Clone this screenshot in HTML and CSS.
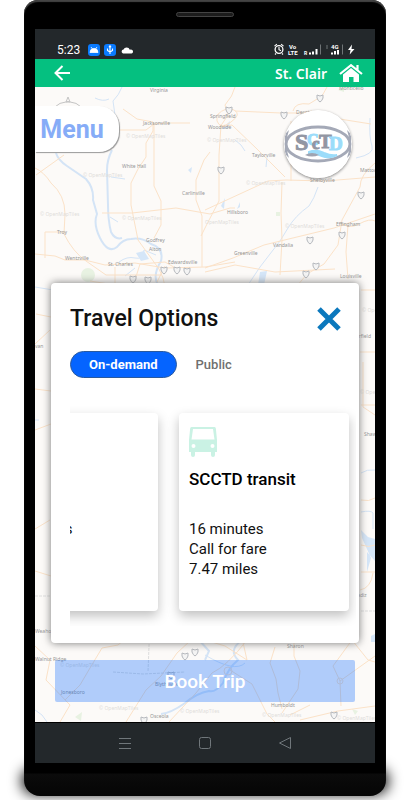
FILE: index.html
```html
<!DOCTYPE html>
<html lang="en">
<head>
<meta charset="UTF-8">
<meta name="viewport" content="width=device-width, initial-scale=1">
<title>St. Clair - Travel Options</title>
<link rel="stylesheet" href="styles.css">
</head>
<body>
<div class="phone">
  <div class="speaker"></div>
  <div class="screen">

    <div class="status-bar">
      <span class="clock">5:23</span>
      <svg class="status-left" width="46" height="12" viewBox="0 0 46 12">
        <rect width="12" height="12" rx="3" fill="#0a7bff"/>
        <path d="M2 8.5a4 4 0 0 1 8 0zM3 3l1.5 2M9 3L7.500 5" fill="#fff" stroke="#fff" stroke-width=".8"/>
        <rect x="16" width="12" height="12" rx="3" fill="#0a7bff"/>
        <path d="M22 2v8M19.500 4.500v2L22 8l2.500-1.500v-2M21 3.200l1-1.400 1 1.400" fill="none" stroke="#fff" stroke-width="1.100"/>
        <path d="M35 9.500h8.500a2 2 0 0 0 .3-3.800q-1.300-.4-2 .1a3.400 3.400 0 0 0-6.300-.2A2 2 0 0 0 35 9.500z" fill="#fff"/>
      </svg>
      <svg class="status-right" width="84" height="14" viewBox="0 0 84 14" fill="none" stroke="#fff">
        <circle cx="6" cy="7.500" r="3.900" stroke-width="1.300"/>
        <path d="M6 5v2.700l2 1M1.500 4.200l2.400-2M10.500 4.200l-2.400-2M3 11.500l-1 1M9 11.500l1 1" stroke-width="1.100"/>
        <g class="status-text">
          <text x="16" y="7" font-size="6">Vo</text>
          <text x="15" y="12.500" font-size="6">LTE</text>
          <text x="31" y="12.500" font-size="5">R</text>
          <text x="58" y="7" font-size="6">4G</text>
        </g>
        <path d="M37 12.500v-2M40 12.500v-3M43.500 12.500V7M62 12.500V9M65 12.500V8" stroke-width="2"/>
        <path d="M59 12.500v-2" stroke-width="2"/>
        <path d="M47.500 12.500V2.500M69.500 12.500V2.500M53 4h2M53 6h2" stroke="#6f7476"/>
        <path d="M79 2.500L75 8h2.500l-.8 4.500L81.500 7H78.500z" fill="#fff" stroke="none"/>
      </svg>
    </div>

    <header class="app-bar">
      <button class="icon-btn" aria-label="Back">
        <svg width="16" height="16" viewBox="0 0 16 16" fill="none" stroke="#fff" stroke-width="2"><path d="M16 8H2M8.500 1L1.500 8l7 7"/></svg>
      </button>
      <span class="region">St. Clair</span>
      <button class="icon-btn" aria-label="Home">
        <svg width="24" height="18" viewBox="0 0 24 18" fill="#fff"><path d="M4 10.500L12 4l8 6.500V18h-5.500v-5h-4.500v5H4z"/><path d="M1 10L12 1.200 23 10M18.500 1v5" fill="none" stroke="#fff" stroke-width="2.200"/></svg>
      </button>
    </header>

    <main class="map">
      <svg class="map-tiles" viewBox="35 87 340 635" preserveAspectRatio="xMidYMin slice" aria-hidden="true">
        <!-- rivers and lakes -->
        <g class="water">
          <path d="M56 153Q58 160 67 166L86 179Q94 188 93 200L97 214Q93 224 100 238Q108 254 117 247Q123 239 131 239Q142 237 151 244Q164 248 161 261Q152 276 158 285" stroke-width="2"/>
          <path d="M112 150Q107 160 107 170L108 205Q108 220 111 232Q115 240 122 238" stroke-width="2"/>
          <path d="M95 98q8 4 14 1M122 87q-3 8-9 14l2 14-5 12M111 177l14 2M110 217l8 5"/>
          <path d="M119 262q8-6 16-4t9-8l12 5M125 276l10-8"/>
          <path d="M318 187q-4 12-9 19-14 10-21 22l-8 13-20 26-12 18"/>
          <path d="M370 118q-1 20 2 28t-16 12M235 140l6 5 4 6M267 157l-1 10"/>
          <path d="M35 287l18 3M35 420h4M361 473q6-4 14-3M361 512q10-2 12 1v16"/>
          <path d="M242 640q-14 10-4 20-10 8-15 23-8 10-14 8-12 2-24 12-14 10-24 11M199 640l10 11-4 9" stroke-width="2"/>
          <path d="M35 710q8 4 12 12M205 655q30 18 40 8"/>
        </g>
        <g class="lake">
          <path d="M136 253l8-2 5 8-8 2zM188 170l4-3-1 6zM260 272l7-1-3 14h-6zM225 198l-4 8 3 3zM240 202l-3 7 3-2zM222 129l8-8-1 7z"/>
          <path d="M361 530l7 7 7 2v22l-8-9v20l4-14-9-20zM371 636l4-2v8h-4z"/>
        </g>
        <g class="park">
          <circle cx="88" cy="275" r="7"/><rect x="276" y="212" width="4" height="4"/><path d="M338 90l6-3v5zM75 717l7-5-1 9zM352 709l6 2-3 4z"/>
        </g>
        <!-- roads -->
        <g class="roads">
          <path d="M35 168q9 4 16 15 14 12 14 31l-1 20q9 18 22 27l20 14h55M64 155L36 175M119 130h27l8-6 12-1h24M123 109l14 10 16 3v9l-7 12v14l-8 12-7 14v22l7 35 21 29q10 18 4 35M154 123v63l7 15v24l-7 13M35 254l20 2 10 4h20l20 5 30-2 30 5 40-1 30-5"/>
          <path d="M45 258v-26h20M102 213h30l44-5 34 6 20-6h5M202 267V216l-6-16v-20l8-20 6-8"/>
          <path d="M235 87q-2 9-10 18l3 10-8 12 12-2 25 24 28 28M217 115q9-9 17-5t-3 12-14-1zM235 111l46 2h21l10-2M221 125l-2 30v46l-12 23-6 12M205 210l63-29 18-1 39 1 50-4M282 182l-1 31 1 27-2 35M293 111q2-9 16-7l13-8 5-9M311 112l10 4 50 8M291 121v60"/>
          <path d="M375 163q-15 12-15 24l-18 33-4 25-14 19-17 10-10 12M205 268l28-10 31-13 70-17 41-14M340 222q8 8 19 2t16-3M348 225l-2 27 2 27M205 272l30-7 40 7 60-3"/>
          <path d="M90 281l25 4M135 280l5-16 25-2 14 8M165 266l-8 16M115 267v18"/>
          <path d="M35 344l15-14M36 314l15 3M35 389l16 2M35 430l16-6M35 529l15-9M35 571l16 5M361 290h14M360 352h15M363 362v45l12 8M361 405h14M361 500q8 2 14-2M361 545q8 3 14 0M360 590q11-2 13-17M361 572h14"/>
          <path d="M35 646l15 14-4 20 24 25-10 17M65 700l15-15 10-17 12-20 16-3 12-10 14 7M126 722l20-32 15-14 16-23 14-13M205 640l20 6 22 14-5-22M247 640q-20 26-35 33l-16 20-27 29M230 670l22 14 15 30 8 8M275 647l-5 16 6 16 2 14 4 16M294 640v16l6 15-2 18-16 24M352 640l16 20 7 2M352 640l-19 26 7 15 1 25M340 681l35-25M300 720l38-9 37-5M290 715l20-10"/>
          <circle cx="340" cy="681" r="3"/><circle cx="228" cy="671" r="4"/>
        </g>
        <path class="border-line" d="M35 596h16M361 611h14M113 672l30 2 42-2M150 620l-2 52"/>
        <!-- interstate shields -->
        <g class="shields">
          <path id="shield" d="M226 107q3 2 6 0v3q-1 3-3 4-2-1-3-4z"/>
          <use href="#shield" x="91" y="-12"/><use href="#shield" x="55" y="5"/><use href="#shield" x="-8" y="60"/>
          <use href="#shield" x="132" y="85"/><use href="#shield" x="81" y="130"/><use href="#shield" x="113" y="125"/>
          <use href="#shield" x="87" y="156"/><use href="#shield" x="77" y="164"/><use href="#shield" x="-65" y="160"/>
          <use href="#shield" x="-52" y="160"/><use href="#shield" x="-42" y="161"/><use href="#shield" x="-96" y="169"/>
          <use href="#shield" x="-81" y="170"/><use href="#shield" x="-44" y="546"/><use href="#shield" x="-34" y="542"/>
          <use href="#shield" x="-58" y="565"/><use href="#shield" x="-85" y="610"/><use href="#shield" x="105" y="605"/>
        </g>
        <g class="towns">
          <text x="150" y="92">Virginia</text><text x="143" y="125">Jacksonville</text><text x="122" y="168">White Hall</text>
          <text x="182" y="195">Carlinville</text><text x="57" y="234">Troy</text><text x="146" y="242">Godfrey</text>
          <text x="149" y="251">Alton</text><text x="65" y="260">Wentzville</text><text x="108" y="266">St. Charles</text>
          <text x="168" y="264">Edwardsville</text><text x="210" y="118">Springfield</text>
          <text x="208" y="129">Woodside</text><text x="252" y="157">Taylorville</text><text x="296" y="114">Decatur</text>
          <text x="310" y="182">Shelbyville</text><text x="360" y="172">Mattoon</text><text x="227" y="214">Hillsboro</text>
          <text x="336" y="226">Effingham</text><text x="273" y="247">Vandalia</text><text x="234" y="255">Greenville</text>
          <text x="340" y="278">Louisville</text><text x="339" y="90">Monticello</text><text x="35" y="348">van</text>
          <text x="352" y="338">Fairfield</text><text x="364" y="436">Shawnee</text><text x="354" y="597">Cadiz</text>
          <text x="35" y="633">Weaho</text><text x="35" y="661">Walnut Ridge</text><text x="61" y="694">Jonesboro</text>
          <text x="155" y="686">Blytheville</text><text x="150" y="718">Osceola</text><text x="271" y="707">Humboldt</text>
          <text x="287" y="648">Sharon</text>
        </g>
        <g class="credits">
          <text x="126" y="138">© OpenMapTiles</text><text x="83" y="177">© OpenMapTiles</text><text x="40" y="216">© OpenMapTiles</text>
          <text x="122" y="220">© OpenMapTiles</text><text x="207" y="142">© OpenMapTiles</text><text x="246" y="185">© OpenMapTiles</text>
          <text x="205" y="224">OpenMapTiles</text><text x="285" y="228">© OpenMapTiles</text><text x="60" y="667">© OpenMapTiles</text>
          <text x="99" y="710">© OpenMapTiles</text><text x="180" y="713">© OpenMapTiles</text><text x="262" y="717">© OpenMapTiles</text>
          <text x="337" y="720">© OpenMapTiles</text><text x="362" y="312">© Open</text><text x="360" y="394">© OpenM</text>
        </g>
        <!-- compass behind the menu tab -->
        <path class="compass" d="M52 109q16-15 32 0M66 102l2-5 2 5z"/>
      </svg>

      <div class="map-controls">
        <button class="menu-tab">Menu</button>
        <svg class="agency" viewBox="0 0 68 68" role="img" aria-label="SCCTD">
          <clipPath id="disc"><circle cx="34" cy="34" r="34"/></clipPath>
          <g clip-path="url(#disc)">
            <rect width="68" height="68" fill="#fff"/>
            <ellipse cx="34" cy="34" rx="32" ry="17" fill="none" stroke="#a4a9b7" stroke-width="3"/>
            <path d="M1 24v20l4 4q-5-14 0-28zM67 24v20l-4 4q5-14 0-28z" fill="#a4a9b7"/>
            <path d="M25 42q7-3 15 1 7 3 13 2-8 4-15 1-6-3-13-2z" fill="#9bdcfa" stroke="#9bdcfa" stroke-width="2"/>
            <path d="M21 45q7-4 14 0-7 3-14 0z" fill="#9fa4b1"/>
            <g class="agency-name">
              <text x="11" y="40" font-size="24" fill="#9296a3" stroke="#9296a3">S</text>
              <text x="23" y="35" font-size="16" fill="#9bdcfa" stroke="#9bdcfa">C</text>
              <text x="28" y="39" font-size="17" fill="#9296a3" stroke="#9296a3">c</text>
              <text x="35" y="38" font-size="19" fill="#9296a3" stroke="#9296a3">T</text>
              <text x="45" y="40" font-size="19" fill="#9bdcfa" stroke="#9bdcfa">D</text>
            </g>
          </g>
        </svg>
      </div>

      <section class="dialog" role="dialog" aria-labelledby="dialog-title">
        <div class="dialog-head">
          <h1 id="dialog-title">Travel Options</h1>
          <button class="icon-btn" aria-label="Close">
            <svg width="24" height="24" viewBox="0 0 24 24" stroke="#0b78bd" stroke-width="5"><path d="M2 2l20 20M22 2L2 22"/></svg>
          </button>
        </div>
        <div class="tabs">
          <button class="tab active">On-demand</button>
          <button class="tab">Public</button>
        </div>
        <div class="options">
          <article class="card">
            <svg class="vehicle" viewBox="0 0 28 30"></svg>
            <h2>Taxi</h2>
            <p>17 minutes</p>
            <p>$ 14.00</p>
            <p>7.2 mi</p>
          </article>
          <article class="card">
            <svg class="vehicle" viewBox="0 0 28 30">
              <path fill-rule="evenodd" d="M2.500 0h23Q27 0 27 3l1 10v12h-2v3a2 2 0 0 1-4 0v-3H6v3a2 2 0 0 1-4 0v-3H0V13L1 3Q1 0 2.500 0zM4 2L2.500 12.500h23L24 2zM4.500 17a2 2 0 1 0 0 4 2 2 0 0 0 0-4zM23.500 17a2 2 0 1 0 0 4 2 2 0 0 0 0-4z"/>
            </svg>
            <h2>SCCTD transit</h2>
            <p>16 minutes</p>
            <p>Call for fare</p>
            <p>7.47 miles</p>
          </article>
        </div>
      </section>

      <button class="book-btn">Book Trip</button>
    </main>

    <nav class="system-nav">
      <button class="icon-btn" aria-label="Recent apps"><svg width="14" height="14" viewBox="0 0 14 14"><path d="M1 2.500h12M1 7.500h12M1 12.500h12"/></svg></button>
      <button class="icon-btn" aria-label="Home screen"><svg width="14" height="14" viewBox="0 0 14 14"><rect x="1.500" y="1.500" width="11" height="11" rx="2"/></svg></button>
      <button class="icon-btn" aria-label="Go back"><svg width="14" height="14" viewBox="0 0 14 14"><path d="M12.500 1.500v11L1.500 7z"/></svg></button>
    </nav>
  </div>
</div>
</body>
</html>
```

FILE: styles.css
```css
* { box-sizing: border-box; }

body {
  margin: 0;
  background: #fff;
  font-family: Roboto, Arial, sans-serif;
  color: #111;
}

button {
  border: none;
  padding: 0;
  background: none;
  font-family: inherit;
  cursor: pointer;
}

svg { display: block; }

.icon-btn { display: flex; }

/* phone body */
.phone {
  display: flex;
  position: relative;
  min-height: calc(100vh - 4px);
  margin: 0 24px 4px;
  padding: 29px 11px 33px;
  background: linear-gradient(to top, #050505, #0b0b0b 22px, #000 23px);
  border-radius: 14px 14px 16px 16px;
  box-shadow: inset 0 2px 1px #444;
}

/* shadow on the table, spreads from the bottom corners */
.phone::before {
  content: "";
  position: absolute;
  z-index: -1;
  left: 2px;
  right: 2px;
  bottom: 6px;
  height: 18px;
  border-radius: 8px;
  background: #000;
  box-shadow: 0 0 14px 4px #000;
}

.speaker {
  position: absolute;
  top: 12px;
  left: calc(50% - 29px);
  width: 58px;
  height: 5px;
  border: 1px solid #444;
  border-radius: 3px;
  background: #1c1c1c;
}

.screen {
  flex: 1;
  min-width: 0;
  display: flex;
  flex-direction: column;
}

/* status bar */
.status-bar {
  display: flex;
  align-items: flex-end;
  height: 30px;
  padding: 0 18px 3px 22px;
  background: #23282b;
}

.clock {
  color: #fff;
  font-size: 12px;
  line-height: 12px;
}

.status-left { margin-left: 8px; }
.status-right { margin-left: auto; }

.status-text {
  fill: #fff;
  stroke: none;
  font-weight: 700;
}

/* green header */
.app-bar {
  display: flex;
  align-items: center;
  gap: 12px;
  height: 28px;
  padding: 0 12px 0 19px;
  background: #05c080;
}

.region {
  margin-left: auto;
  color: #fff;
  font-family: "Noto Sans", sans-serif;
  font-size: 14px;
  font-weight: 600;
}

/* map */
.map {
  position: relative;
  flex: 1;
  display: flex;
  flex-direction: column;
  padding: 19px 16px 20px;
  overflow: hidden;
  background: #fcfaf8;
  border-bottom: 1px solid #000;
}

.map-tiles {
  position: absolute;
  top: 0;
  left: 0;
  width: 100%;
  height: 100%;
  fill: none;
}

.water { stroke: #d4e4f6; }
.lake { fill: #d5e6f8; }
.park { fill: #e8f2e2; }
.roads { stroke: #fbe2c8; }
.border-line { stroke: #dedede; stroke-dasharray: 3 1; }
.shields { fill: #f4f4f4; stroke: #b5b8bd; }
.compass { stroke: #c4c4c4; }

.towns, .credits {
  font-family: "Noto Sans", sans-serif;
  font-size: 5px;
  fill: #969696;
}

.credits { fill: #dfdddb; }

.map-controls {
  position: relative;
  display: flex;
  justify-content: space-between;
  align-items: flex-start;
  padding-right: 7px;
}

.menu-tab {
  width: 84px;
  height: 46px;
  margin-left: -16px;
  padding-right: 10px;
  background: #fff;
  border-radius: 0 20px 20px 0;
  box-shadow: 1px 1px 1px #999;
  color: #86acf7;
  font-size: 25px;
  font-weight: 700;
}

.agency {
  width: 68px;
  height: 68px;
  margin-top: 4px;
  border-radius: 50%;
  box-shadow: 0 1px 3px #888;
}

.agency-name {
  font-family: "Liberation Serif", serif;
  font-weight: 700;
}

/* travel options */
.dialog {
  position: relative;
  margin-top: 105px;
  padding: 21px 3px 17px 19px;
  background: #fff;
  border-radius: 4px;
  box-shadow: 0 0 8px #777;
}

.dialog-head {
  display: flex;
  justify-content: space-between;
  align-items: center;
  padding-right: 15px;
}

h1 {
  margin: 0;
  font-size: 23px;
  font-weight: 500;
  line-height: 30px;
}

.tabs {
  display: flex;
  gap: 1px;
  margin-top: 17px;
}

.tab {
  height: 27px;
  padding: 0 18px;
  border-radius: 14px;
  color: #707070;
  font-size: 13px;
  font-weight: 500;
}

.tab.active {
  background: #0564ff;
  border: 1px solid #2b5a9e;
  color: #fff;
  font-weight: 700;
}

/* scrolled to the last card */
.options {
  display: flex;
  justify-content: flex-end;
  gap: 21px;
  margin-top: 24px;
  padding: 11px 7px 15px 0;
  overflow: hidden;
}

.card {
  flex: 0 0 170px;
  height: 198px;
  padding: 14px 10px;
  background: #fff;
  border-radius: 4px;
  box-shadow: 0 5px 12px rgba(0,0,0,0.25);
}

.vehicle {
  width: 28px;
  height: 30px;
  fill: #caf2e4;
}

.card h2 {
  margin: 12px 0 30px;
  font-size: 17px;
  font-weight: 500;
  line-height: 20px;
  color: #000;
}

.card p {
  margin: 0;
  font-size: 15px;
  line-height: 20px;
}

.book-btn {
  position: relative;
  height: 42px;
  margin: auto 4px 0;
  background: rgba(0,98,255,0.3);
  border-radius: 2px;
  color: #fff;
  font-size: 19px;
  font-weight: 500;
}

/* android buttons */
.system-nav {
  display: flex;
  justify-content: center;
  align-items: center;
  gap: 66px;
  height: 40px;
  background: #23282b;
}

.system-nav svg {
  fill: none;
  stroke: #70777b;
}
```
